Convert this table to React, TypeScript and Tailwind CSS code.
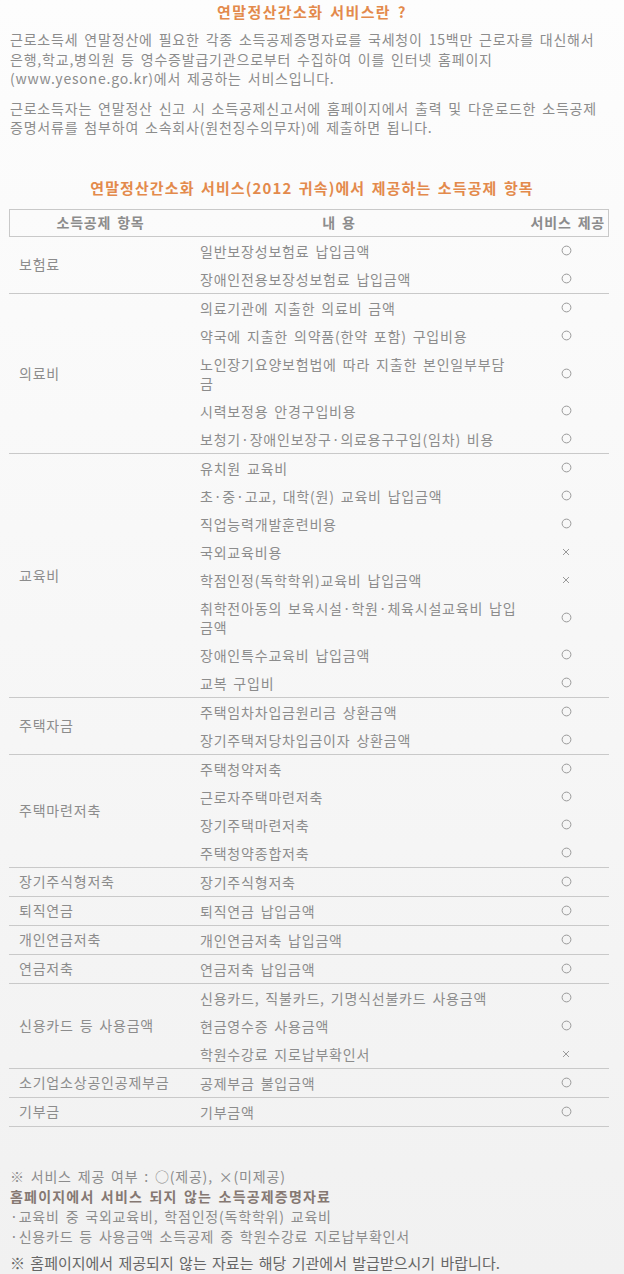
import React from "react";

type Item = { t: React.ReactNode; ok: boolean; double?: boolean };
type Group = { label: string; items: Item[] };

const groups: Group[] = [
  {
    label: "보험료",
    items: [
      { t: "일반보장성보험료 납입금액", ok: true },
      { t: "장애인전용보장성보험료 납입금액", ok: true },
    ],
  },
  {
    label: "의료비",
    items: [
      { t: "의료기관에 지출한 의료비 금액", ok: true },
      { t: "약국에 지출한 의약품(한약 포함) 구입비용", ok: true },
      {
        t: (
          <>
            노인장기요양보험법에 따라 지출한 본인일부부담
            <br />금
          </>
        ),
        ok: true,
        double: true,
      },
      { t: "시력보정용 안경구입비용", ok: true },
      { t: "보청기·장애인보장구·의료용구구입(임차) 비용", ok: true },
    ],
  },
  {
    label: "교육비",
    items: [
      { t: "유치원 교육비", ok: true },
      { t: "초·중·고교, 대학(원) 교육비 납입금액", ok: true },
      { t: "직업능력개발훈련비용", ok: true },
      { t: "국외교육비용", ok: false },
      { t: "학점인정(독학학위)교육비 납입금액", ok: false },
      {
        t: (
          <>
            취학전아동의 보육시설·학원·체육시설교육비 납입
            <br />금액
          </>
        ),
        ok: true,
        double: true,
      },
      { t: "장애인특수교육비 납입금액", ok: true },
      { t: "교복 구입비", ok: true },
    ],
  },
  {
    label: "주택자금",
    items: [
      { t: "주택임차차입금원리금 상환금액", ok: true },
      { t: "장기주택저당차입금이자 상환금액", ok: true },
    ],
  },
  {
    label: "주택마련저축",
    items: [
      { t: "주택청약저축", ok: true },
      { t: "근로자주택마련저축", ok: true },
      { t: "장기주택마련저축", ok: true },
      { t: "주택청약종합저축", ok: true },
    ],
  },
  { label: "장기주식형저축", items: [{ t: "장기주식형저축", ok: true }] },
  { label: "퇴직연금", items: [{ t: "퇴직연금 납입금액", ok: true }] },
  { label: "개인연금저축", items: [{ t: "개인연금저축 납입금액", ok: true }] },
  { label: "연금저축", items: [{ t: "연금저축 납입금액", ok: true }] },
  {
    label: "신용카드 등 사용금액",
    items: [
      { t: "신용카드, 직불카드, 기명식선불카드 사용금액", ok: true },
      { t: "현금영수증 사용금액", ok: true },
      { t: "학원수강료 지로납부확인서", ok: false },
    ],
  },
  { label: "소기업소상공인공제부금", items: [{ t: "공제부금 불입금액", ok: true }] },
  { label: "기부금", items: [{ t: "기부금액", ok: true }] },
];

function Mark({ ok }: { ok: boolean }) {
  return ok ? (
    <svg width="11" height="11" viewBox="0 0 11 11">
      <circle cx="5.5" cy="5.5" r="4.4" fill="none" stroke="#9a9a9a" strokeWidth="1" />
    </svg>
  ) : (
    <svg width="8" height="8" viewBox="0 0 8 8">
      <path d="M1 1 L7 7 M7 1 L1 7" stroke="#9a9a9a" strokeWidth="1" />
    </svg>
  );
}

export default function App() {
  return (
    <div
      className="min-h-[1274px] w-[624px] bg-gradient-to-b from-[#fdfdfd] to-[#f1f1f1] text-[#8c8c8c] text-[14px] tracking-[0.8px] [word-spacing:2px]"
      style={{ fontFamily: '"Noto Sans CJK KR", "Noto Sans", sans-serif' }}
    >
      <div className="pt-[2px] text-center text-[15px] leading-[20px] font-bold tracking-[1.4px] text-[#e38a4c]">
        연말정산간소화 서비스란 ?
      </div>
      <p className="mt-[8px] px-[10px] leading-[19.5px] whitespace-nowrap">
        근로소득세 연말정산에 필요한 각종 소득공제증명자료를 국세청이 15백만 근로자를 대신해서
        <br />
        은행,학교,병의원 등 영수증발급기관으로부터 수집하여 이를 인터넷 홈페이지
        <br />
        (www.yesone.go.kr)에서 제공하는 서비스입니다.
      </p>
      <p className="mt-[10px] px-[10px] leading-[19.5px] whitespace-nowrap">
        근로소득자는 연말정산 신고 시 소득공제신고서에 홈페이지에서 출력 및 다운로드한 소득공제
        <br />
        증명서류를 첨부하여 소속회사(원천징수의무자)에 제출하면 됩니다.
      </p>
      <div className="mt-[40px] text-center text-[15px] leading-[20px] font-bold tracking-[1.1px] text-[#e38a4c]">
        연말정산간소화 서비스(2012 귀속)에서 제공하는 소득공제 항목
      </div>

      <div className="ml-[9px] mt-[11px] w-[600px]">
        <div className="flex h-[28px] items-center border border-[#c9c9c9] font-bold text-[#8c8c8c]">
          <div className="w-[181px] text-center">소득공제 항목</div>
          <div className="w-[296px] text-center">내 용</div>
          <div className="flex-1 pr-[3px] text-right">서비스 제공</div>
        </div>
        {groups.map((g) => (
          <div key={g.label} className="flex border-b border-[#c9c9c9]">
            <div className="flex w-[191px] items-center whitespace-nowrap pl-[10px]">{g.label}</div>
            <div className="flex-1">
              {g.items.map((it, i) => (
                <div key={i} className="flex items-center">
                  <div className="w-[324px] whitespace-nowrap pt-[5px] pb-[4px] leading-[19px]">{it.t}</div>
                  <div className="flex w-[84px] items-center justify-center">
                    <Mark ok={it.ok} />
                  </div>
                </div>
              ))}
            </div>
          </div>
        ))}
      </div>

      <div className="mt-[39px] px-[10px] leading-[20px] whitespace-nowrap">
        <div>※ 서비스 제공 여부 : ○(제공), ×(미제공)</div>
        <div className="font-bold tracking-[1.2px] text-[#857872]">홈페이지에서 서비스 되지 않는 소득공제증명자료</div>
        <div>·교육비 중 국외교육비, 학점인정(독학학위) 교육비</div>
        <div>·신용카드 등 사용금액 소득공제 중 학원수강료 지로납부확인서</div>
        <div className="mt-[7px] text-[15px] tracking-[0px] text-[#666666]">
          ※ 홈페이지에서 제공되지 않는 자료는 해당 기관에서 발급받으시기 바랍니다.
        </div>
      </div>
    </div>
  );
}
